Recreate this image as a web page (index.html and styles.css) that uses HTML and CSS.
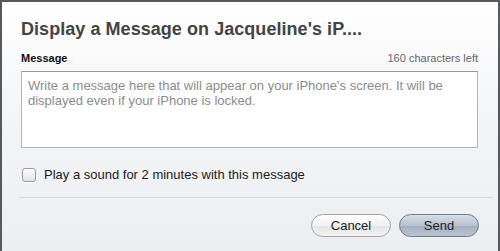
FILE: index.html
```html
<!DOCTYPE html>
<html lang="en">
<head>
    <meta charset="UTF-8">
    <title>Display a Message</title>
    <link rel="stylesheet" href="styles.css">
</head>
<body>
    <div class="dialog">
        <h2 class="dialog-title">Display a Message on Jacqueline's iP....</h2>

        <div class="field-head">
            <span class="field-label">Message</span>
            <span class="field-count">160 characters left</span>
        </div>
        <textarea class="message-box" placeholder="Write a message here that will appear on your iPhone's screen. It will be displayed even if your iPhone is locked."></textarea>

        <label class="sound-option">
            <span class="checkbox"></span>
            Play a sound for 2 minutes with this message
        </label>

        <div class="separator"></div>

        <div class="actions">
            <button class="btn btn-cancel">Cancel</button>
            <button class="btn btn-send">Send</button>
        </div>
    </div>
</body>
</html>
```

FILE: styles.css
```css
* {
    margin: 0;
    padding: 0;
    box-sizing: border-box;
    font-family: "Liberation Sans", Arial, Helvetica, sans-serif;
}

html, body {
    height: 100%;
}

body {
    background: #58595e;
    padding: 2px 2px 0 2px;
    overflow: hidden;
}

.dialog {
    height: 100%;
    background: linear-gradient(#ffffff 0%, #f4f5f7 45%, #eceef1 100%);
    padding: 16px 20px 0 19px;
}

.dialog-title {
    font-size: 18px;
    font-weight: bold;
    color: #444;
    line-height: 22px;
    letter-spacing: 0.05px;
}

.field-head {
    display: flex;
    justify-content: space-between;
    align-items: baseline;
    margin-top: 12px;
    height: 19px;
}

.field-label {
    font-size: 11px;
    font-weight: bold;
    color: #111;
}

.field-count {
    font-size: 11px;
    color: #666;
}

.message-box {
    display: block;
    width: 100%;
    height: 77px;
    border: 1px solid #b4b4b4;
    border-top-color: #9a9a9a;
    background: #fff;
    resize: none;
    padding: 6px 6px;
    font-size: 13px;
    line-height: 15px;
    color: #333;
    outline: none;
}

.message-box::placeholder {
    color: #8c8c8c;
}

.sound-option {
    display: flex;
    align-items: center;
    gap: 8px;
    margin-top: 19px;
    margin-left: 1px;
    font-size: 13px;
    color: #222;
}

.checkbox {
    width: 14px;
    height: 14px;
    border: 1px solid #9c9c9c;
    border-radius: 3px;
    background: linear-gradient(#fdfdfd, #e2e2e2);
    box-shadow: 0 1px 0 rgba(255, 255, 255, 0.8);
}

.separator {
    height: 1px;
    background: #d9dadd;
    margin: 15px -15px 0 -2px;
}

.actions {
    display: flex;
    justify-content: flex-end;
    gap: 8px;
    margin-top: 16px;
    margin-right: -1px;
}

.btn {
    width: 80px;
    height: 23px;
    border-radius: 12px;
    font-size: 13px;
    color: #222;
    cursor: pointer;
}

.btn-cancel {
    border: 1px solid #a3a3a3;
    background: linear-gradient(#ffffff, #f1f1f1 50%, #e4e4e4 51%, #f4f4f4);
}

.btn-send {
    border: 1px solid #6f7c8c;
    background: linear-gradient(#d6dde6, #b7c2cf 50%, #a3b0c0 51%, #b9c4d1);
}
```
